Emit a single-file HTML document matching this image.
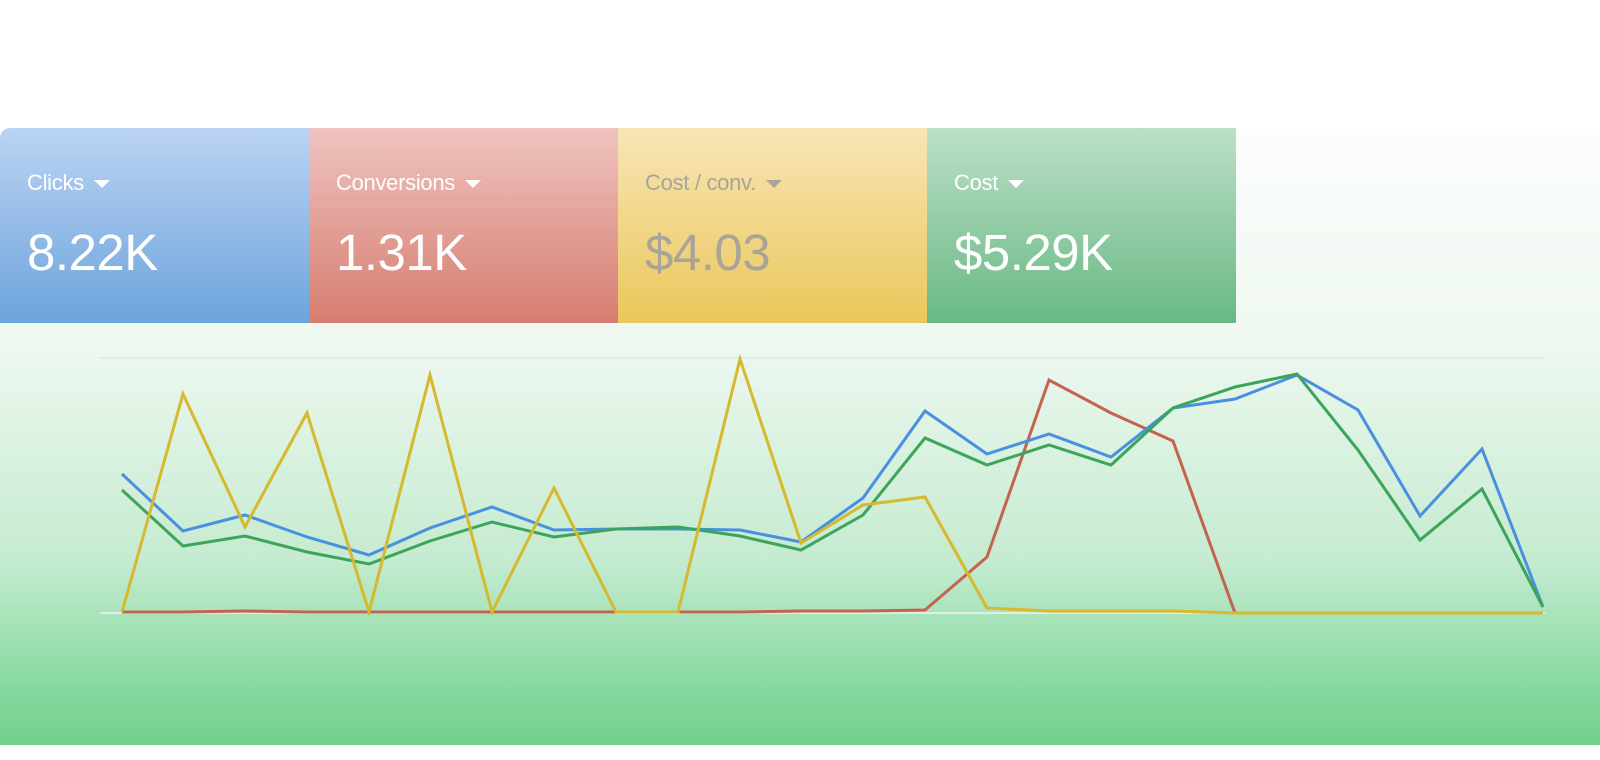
<!DOCTYPE html>
<html><head><meta charset="utf-8"><style>
body{margin:0;width:1600px;height:760px;background:#fff;position:relative;overflow:hidden;font-family:"Liberation Sans",sans-serif}
.panel{position:absolute;left:0;top:128px;width:1600px;height:617px;background:linear-gradient(#fcfdfc 0%,#eef8f0 35%,#c5ebd0 70%,#9fe1b3 82%,#6fd08c 100%);border-top-left-radius:10px}
.card{position:absolute;top:128px;height:195px;width:309px;color:#fff}
.card .l,.card .v{position:absolute;left:27px}
.l{top:42px;font-size:22px;letter-spacing:-0.3px}
.v{top:95px;font-size:51px;letter-spacing:-0.5px}
.tri{display:inline-block;width:0;height:0;border-left:8px solid transparent;border-right:8px solid transparent;border-top:8px solid currentColor;margin-left:10px;vertical-align:middle}
</style></head><body>
<div class="panel"></div>
<div class="card" style="left:0;border-top-left-radius:10px;background:linear-gradient(#bcd4f3,#6ca4dc)"><div class="l">Clicks<span class="tri"></span></div><div class="v">8.22K</div></div>
<div class="card" style="left:309px;background:linear-gradient(#efc3bf,#d67d70)"><div class="l">Conversions<span class="tri"></span></div><div class="v">1.31K</div></div>
<div class="card" style="left:618px;background:linear-gradient(#f8e5b6,#eac75a);color:#a8a49a"><div class="l">Cost / conv.<span class="tri"></span></div><div class="v">$4.03</div></div>
<div class="card" style="left:927px;background:linear-gradient(#bde0c7,#68b884)"><div class="l">Cost<span class="tri"></span></div><div class="v">$5.29K</div></div>
<svg width="1600" height="760" style="position:absolute;left:0;top:0" fill="none" stroke-width="3" stroke-linejoin="miter">
<g stroke="#dfeee3" stroke-width="2"><line x1="100" y1="358" x2="1545" y2="358"/><line x1="100" y1="486" x2="1545" y2="486"/><line x1="100" y1="613" x2="1545" y2="613"/></g>
<polyline stroke="#c4634f" points="122,612 183,612 245,611 307,612 369,612 430,612 492,612 554,612 616,612 678,612 740,612 801,611 863,611 925,610 987,557 1049,380 1111,413 1173,441 1235,613 1297,613 1358,613 1420,613 1482,613 1543,613"/>
<polyline stroke="#4a90e0" points="122,474 183,531 245,515 307,537 369,555 430,528 492,507 554,530 616,529 678,529 740,530 801,542 863,498 925,411 987,454 1049,434 1111,457 1173,408 1235,399 1297,375 1358,410 1420,516 1482,449 1543,607"/>
<polyline stroke="#3ba55a" points="122,490 183,546 245,536 307,552 369,564 430,541 492,522 554,537 616,529 678,527 740,536 801,550 863,515 925,438 987,465 1049,445 1111,465 1173,408 1235,387 1297,374 1358,450 1420,540 1482,489 1543,607"/>
<polyline stroke="#d6b92f" points="122,612 183,394 245,527 307,413 369,612 430,375 492,612 554,488 616,612 678,612 740,359 801,543 863,505 925,497 987,608 1049,611 1111,611 1173,611 1235,613 1297,613 1358,613 1420,613 1482,613 1543,613"/>
</svg>
</body></html>
